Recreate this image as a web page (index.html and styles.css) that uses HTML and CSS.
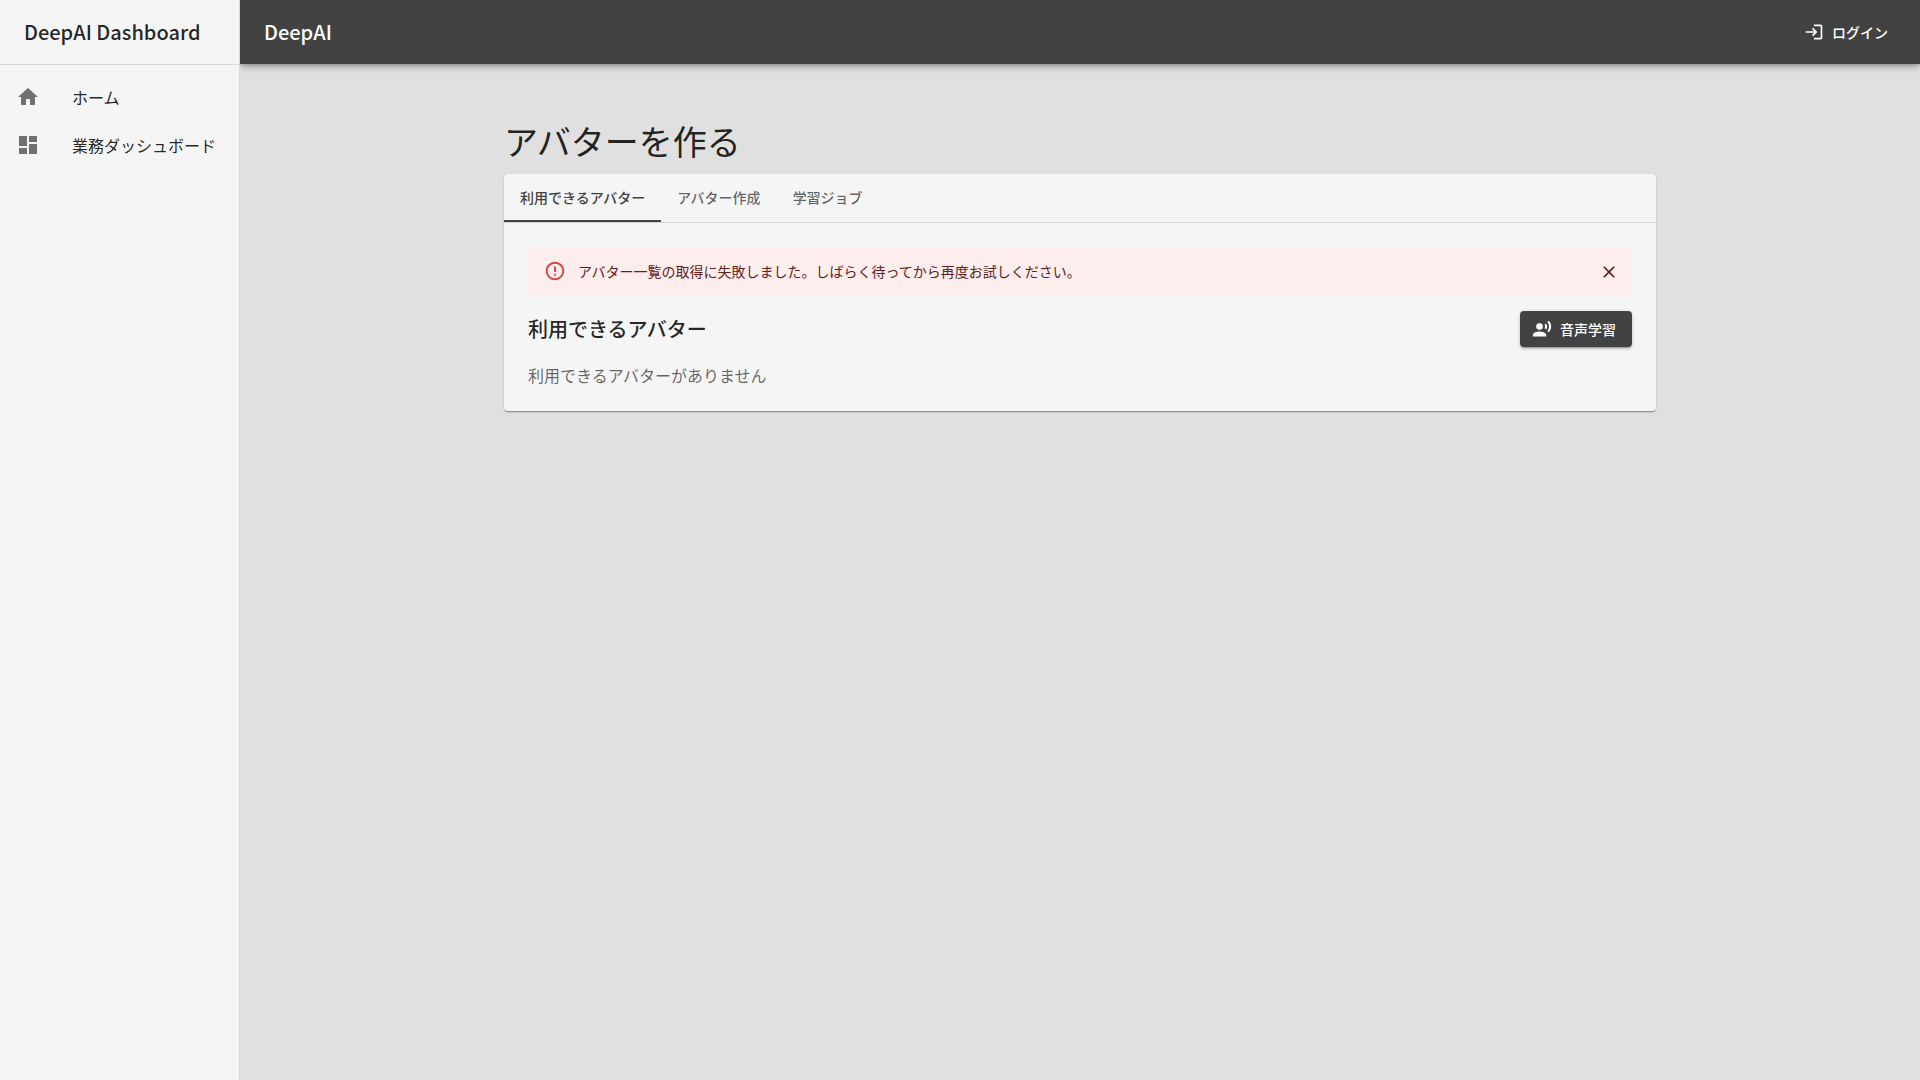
FILE: index.html
```html
<!DOCTYPE html>
<html lang="ja">
<head>
  <meta charset="utf-8">
  <meta name="viewport" content="width=device-width, initial-scale=1">
  <title>DeepAI Dashboard</title>
  <link rel="stylesheet" href="styles.css">
</head>
<body>
  <div class="app">
    <aside class="sidebar">
      <div class="sidebar-title">DeepAI Dashboard</div>
      <nav class="nav">
        <a class="nav-item" href="#home">
          <svg class="icon icon-md nav-icon" viewBox="0 0 24 24" aria-hidden="true"><path d="M10 20v-6h4v6h5v-8h3L12 3 2 12h3v8z"/></svg>
          <span>ホーム</span>
        </a>
        <a class="nav-item" href="#dashboard">
          <svg class="icon icon-md nav-icon" viewBox="0 0 24 24" aria-hidden="true"><path d="M3 13h8V3H3zm0 8h8v-6H3zm10 0h8V11h-8zm0-18v6h8V3z"/></svg>
          <span>業務ダッシュボード</span>
        </a>
      </nav>
    </aside>

    <div class="content">
      <header class="appbar">
        <div class="appbar-title">DeepAI</div>
        <button class="button button-text" type="button">
          <svg class="icon icon-sm" viewBox="0 0 24 24" aria-hidden="true"><path d="M11 7 9.6 8.4l2.6 2.6H2v2h10.2l-2.6 2.6L11 17l5-5zm9 12h-8v2h8c1.1 0 2-.9 2-2V5c0-1.1-.9-2-2-2h-8v2h8z"/></svg>
          ログイン
        </button>
      </header>

      <main class="main">
        <h1 class="page-title">アバターを作る</h1>
        <section class="card">
          <div class="tabs" role="tablist">
            <button class="tab tab-selected" type="button" role="tab" aria-selected="true">利用できるアバター</button>
            <button class="tab" type="button" role="tab" aria-selected="false">アバター作成</button>
            <button class="tab" type="button" role="tab" aria-selected="false">学習ジョブ</button>
          </div>
          <div class="panel" role="tabpanel">
            <div class="alert" role="alert">
              <svg class="icon alert-icon" viewBox="0 0 24 24" aria-hidden="true"><path d="M11 15h2v2h-2v-2zm0-8h2v6h-2V7zm.99-5C6.47 2 2 6.48 2 12s4.47 10 9.99 10C17.52 22 22 17.52 22 12S17.52 2 11.99 2zM12 20c-4.42 0-8-3.58-8-8s3.58-8 8-8 8 3.58 8 8-3.58 8-8 8z"/></svg>
              <p class="alert-message">アバター一覧の取得に失敗しました。しばらく待ってから再度お試しください。</p>
              <button class="alert-close" type="button" aria-label="閉じる">
                <svg class="icon icon-sm" viewBox="0 0 24 24" aria-hidden="true"><path d="M19 6.41 17.59 5 12 10.59 6.41 5 5 6.41 10.59 12 5 17.59 6.41 19 12 13.41 17.59 19 19 17.59 13.41 12z"/></svg>
              </button>
            </div>
            <div class="section-head">
              <h2 class="section-title">利用できるアバター</h2>
              <button class="button button-contained" type="button">
                <svg class="icon icon-sm" viewBox="0 0 24 24" aria-hidden="true"><circle cx="9" cy="9" r="4"/><path d="M9 15c-2.67 0-8 1.34-8 4v2h16v-2c0-2.66-5.33-4-8-4m7.76-9.64-1.68 1.69c.84 1.18.84 2.71 0 3.89l1.68 1.69c2.02-2.02 2.02-5.07 0-7.27M20.07 2l-1.63 1.63c2.77 3.02 2.77 7.56 0 10.74L20.07 16c3.9-3.89 3.91-9.95 0-14"/></svg>
                音声学習
              </button>
            </div>
            <p class="empty">利用できるアバターがありません</p>
          </div>
        </section>
      </main>
    </div>
  </div>
</body>
</html>
```
FILE: styles.css
```css
*,
*::before,
*::after {
  box-sizing: border-box;
}

body {
  margin: 0;
  background: #e0e0e0;
  color: rgba(0, 0, 0, 0.87);
  font-family: "Noto Sans CJK JP", sans-serif;
  font-size: 16px;
  line-height: 24px;
  -webkit-font-smoothing: antialiased;
}

h1,
h2,
p {
  margin: 0;
}

button {
  border: 0;
  background: none;
  color: inherit;
  font: inherit;
  cursor: pointer;
}

.icon {
  display: block;
  flex: none;
  fill: currentColor;
}

.icon-sm {
  width: 20px;
  height: 20px;
}

.icon-md {
  width: 24px;
  height: 24px;
}

.app {
  display: flex;
  min-height: 100vh;
}

/* Sidebar */
.sidebar {
  flex: 0 0 240px;
  z-index: 1;
  border-right: 1px solid rgba(0, 0, 0, 0.12);
  background: #f5f5f5;
}

.sidebar-title {
  padding: 16px 24px;
  border-bottom: 1px solid rgba(0, 0, 0, 0.12);
  font-size: 20px;
  font-weight: 500;
  line-height: 32px;
  white-space: nowrap;
}

.nav {
  padding: 8px 0;
}

.nav-item {
  display: flex;
  align-items: center;
  gap: 32px;
  padding: 12px 16px;
  color: inherit;
  text-decoration: none;
  white-space: nowrap;
}

.nav-icon {
  color: rgba(0, 0, 0, 0.54);
}

/* Main column */
.content {
  flex: 1;
  min-width: 0;
}

.appbar {
  display: flex;
  align-items: center;
  justify-content: space-between;
  min-height: 64px;
  padding: 0 24px;
  background: #424242;
  color: #fff;
  box-shadow: 0 2px 4px -1px rgba(0, 0, 0, 0.2), 0 4px 5px rgba(0, 0, 0, 0.14), 0 1px 10px rgba(0, 0, 0, 0.12);
}

.appbar-title {
  font-size: 20px;
  font-weight: 500;
  line-height: 32px;
}

.button {
  display: flex;
  align-items: center;
  gap: 8px;
  border-radius: 4px;
  font-size: 14px;
  font-weight: 500;
}

.button-text {
  padding: 6px 8px;
}

.button-contained {
  padding: 6px 16px 6px 12px;
  background: #424242;
  color: #fff;
  box-shadow: 0 3px 1px -2px rgba(0, 0, 0, 0.2), 0 2px 2px rgba(0, 0, 0, 0.14), 0 1px 5px rgba(0, 0, 0, 0.12);
}

.main {
  max-width: 1200px;
  margin: 0 auto;
  padding: 56px 24px;
}

.page-title {
  margin-bottom: 12px;
  font-size: 34px;
  font-weight: 400;
  line-height: 42px;
}

/* Card with tabs */
.card {
  border-radius: 4px;
  background: #f5f5f5;
  box-shadow: 0 2px 1px -1px rgba(0, 0, 0, 0.2), 0 1px 1px rgba(0, 0, 0, 0.14), 0 1px 3px rgba(0, 0, 0, 0.12);
}

.tabs {
  display: flex;
  border-bottom: 1px solid rgba(0, 0, 0, 0.12);
}

.tab {
  height: 48px;
  padding: 0 16px;
  border-bottom: 2px solid transparent;
  color: rgba(0, 0, 0, 0.6);
  font-size: 14px;
  font-weight: 500;
}

.tab-selected {
  border-bottom-color: #424242;
  color: #424242;
}

.panel {
  padding: 24px;
}

.alert {
  display: flex;
  align-items: flex-start;
  gap: 12px;
  margin-bottom: 16px;
  padding: 6px 8px 6px 16px;
  border-radius: 4px;
  background: #fdeded;
  color: #5f2120;
}

.alert-icon {
  width: 22px;
  height: 22px;
  margin: 7px 0;
  color: #d32f2f;
  opacity: 0.9;
}

.alert-message {
  flex: 1;
  padding: 8px 0;
  font-size: 14px;
  line-height: 20px;
}

.alert-close {
  margin-top: 4px;
  padding: 5px;
}

.section-head {
  display: flex;
  align-items: center;
  justify-content: space-between;
  margin-bottom: 16px;
}

.section-title {
  font-size: 20px;
  font-weight: 500;
  line-height: 32px;
}

.empty {
  color: rgba(0, 0, 0, 0.6);
}
```
